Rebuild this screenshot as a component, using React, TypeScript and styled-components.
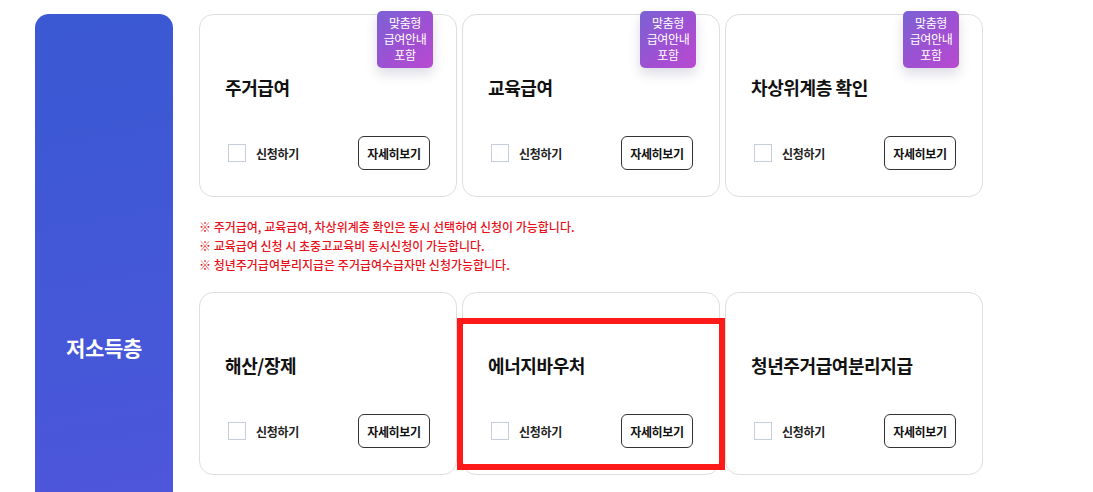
import React from "react";
import styled, { createGlobalStyle } from "styled-components";

const GlobalStyle = createGlobalStyle`
  html, body {
    margin: 0;
    padding: 0;
    background: #ffffff;
    overflow: hidden;
  }
  body {
    font-family: "Noto Sans CJK KR", "Noto Sans", sans-serif;
    color: #111;
  }
  * { box-sizing: border-box; }
`;

const Page = styled.div`
  display: flex;
  align-items: flex-start;
  gap: 26px;
  padding: 14px 0 0 35px;
  width: 1093px;
  height: 492px;
  overflow: hidden;
`;

const Sidebar = styled.div`
  flex: 0 0 138px;
  height: 666px;
  border-radius: 14px 14px 0 0;
  background: linear-gradient(170deg, #3a59d2 0%, #4757d9 55%, #5a54de 100%);
  display: flex;
  align-items: center;
  justify-content: center;
  color: #fff;
  font-size: 21px;
  font-weight: 700;
  letter-spacing: -0.3px;
`;

const Content = styled.div`
  display: flex;
  flex-direction: column;
  width: 784px;
`;

const CardGrid = styled.div`
  display: grid;
  grid-template-columns: repeat(3, 258px);
  gap: 5px;
`;

const Card = styled.div`
  position: relative;
  height: 183px;
  border: 1px solid #dedede;
  border-radius: 14px;
  background: #fff;
  padding: 59px 26px 26px 25px;
  display: flex;
  flex-direction: column;
`;

const Badge = styled.div`
  position: absolute;
  top: -4px;
  right: 23px;
  width: 56px;
  padding: 4px 0 5px;
  border-radius: 5px;
  background: linear-gradient(135deg, #7a62d4 0%, #a24fd2 60%, #b84ad1 100%);
  box-shadow: 0 6px 12px rgba(60, 60, 110, 0.18);
  color: #fff;
  text-align: center;
`;

const BadgeLine = styled.span`
  display: block;
  font-size: 12px;
  line-height: 16px;
  height: 16px;
  letter-spacing: -0.4px;
  white-space: nowrap;
`;

const Title = styled.div`
  font-size: 18px;
  font-weight: 700;
  line-height: 26px;
  letter-spacing: -0.4px;
  color: #111;
`;

const Actions = styled.div`
  margin-top: auto;
  display: flex;
  align-items: center;
  justify-content: space-between;
`;

const CheckLabel = styled.label`
  display: flex;
  align-items: center;
  gap: 10px;
  padding-left: 3px;
  font-size: 12px;
  font-weight: 700;
  color: #222;
  letter-spacing: -0.3px;
`;

const CheckBox = styled.span`
  width: 18px;
  height: 18px;
  border: 1px solid #c6cede;
  background: #fff;
`;

const DetailButton = styled.button`
  width: 72px;
  height: 34px;
  border: 1px solid #333;
  border-radius: 6px;
  background: #fff;
  font-family: inherit;
  font-size: 12px;
  font-weight: 700;
  color: #111;
  letter-spacing: -0.3px;
  padding: 0;
`;

const Highlight = styled.div`
  position: absolute;
  left: -6px;
  right: -6px;
  top: 25px;
  bottom: 4px;
  border: 6px solid #ff1a1a;
  pointer-events: none;
`;

const Notes = styled.ul`
  list-style: none;
  margin: 0;
  padding: 20px 0 18px;
  color: #e8101a;
  font-size: 12px;
  font-weight: 500;
  line-height: 19px;
  letter-spacing: 0;
`;

type Item = { title: string; badge?: boolean; highlight?: boolean };

const topItems: Item[] = [
  { title: "주거급여", badge: true },
  { title: "교육급여", badge: true },
  { title: "차상위계층 확인", badge: true },
];

const bottomItems: Item[] = [
  { title: "해산/장제" },
  { title: "에너지바우처", highlight: true },
  { title: "청년주거급여분리지급" },
];

const notes = [
  "※ 주거급여, 교육급여, 차상위계층 확인은 동시 선택하여 신청이 가능합니다.",
  "※ 교육급여 신청 시 초중고교육비 동시신청이 가능합니다.",
  "※ 청년주거급여분리지급은 주거급여수급자만 신청가능합니다.",
];

const badgeLines = ["맞춤형", "급여안내", "포함"];

function BenefitCard({ title, badge, highlight }: Item) {
  return (
    <Card>
      {badge && (
        <Badge>
          {badgeLines.map((l) => (
            <BadgeLine key={l}>{l}</BadgeLine>
          ))}
        </Badge>
      )}
      <Title>{title}</Title>
      <Actions>
        <CheckLabel>
          <CheckBox />
          신청하기
        </CheckLabel>
        <DetailButton>자세히보기</DetailButton>
      </Actions>
      {highlight && <Highlight />}
    </Card>
  );
}

export default function App() {
  return (
    <>
      <GlobalStyle />
      <Page>
        <Sidebar>저소득층</Sidebar>
        <Content>
          <CardGrid>
            {topItems.map((it) => (
              <BenefitCard key={it.title} {...it} />
            ))}
          </CardGrid>
          <Notes>
            {notes.map((n) => (
              <li key={n}>{n}</li>
            ))}
          </Notes>
          <CardGrid>
            {bottomItems.map((it) => (
              <BenefitCard key={it.title} {...it} />
            ))}
          </CardGrid>
        </Content>
      </Page>
    </>
  );
}
